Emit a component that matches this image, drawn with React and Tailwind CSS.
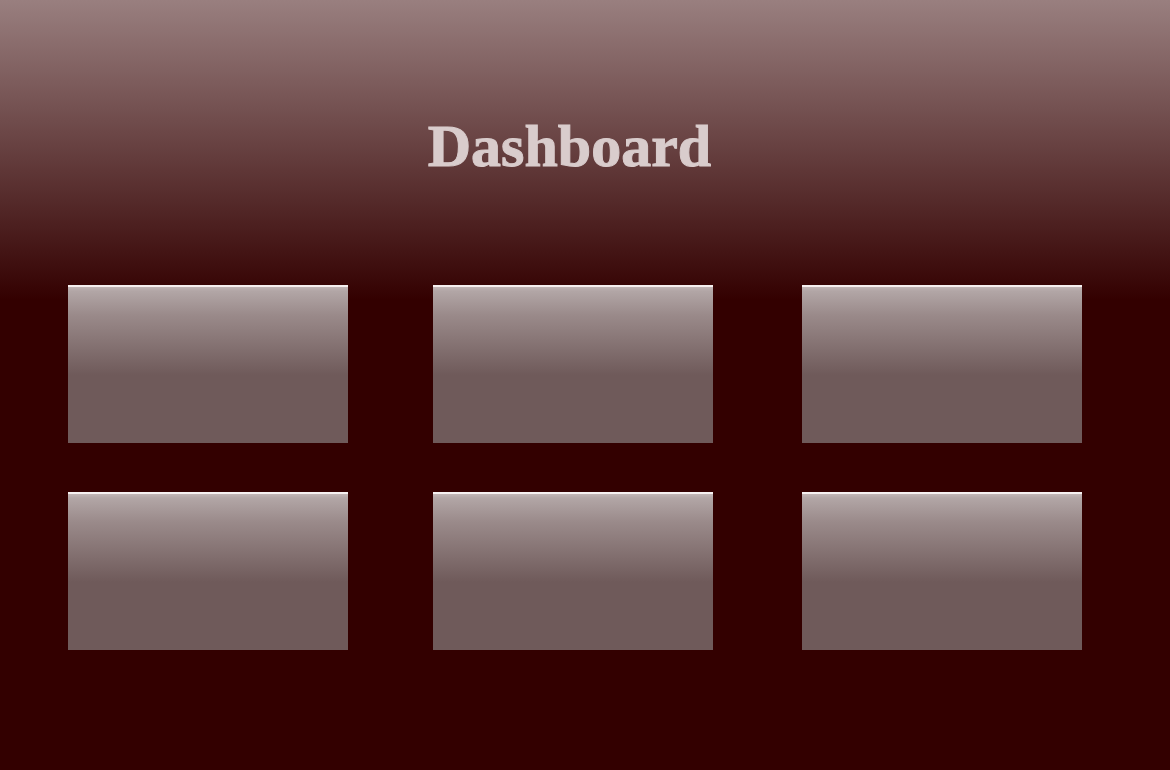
export default function App() {
  const card = "h-[158px] w-[280px] bg-[linear-gradient(to_bottom,#f6f0f0_0px,#f6f0f0_2px,#c2b6b6_2px,#b2a6a6_6px,#9a8a8a_30px,#6f5a5a_90px,#6f5a5a_100%)]";
  return (
    <div className="min-h-[770px] w-full bg-[#330000] bg-[linear-gradient(to_bottom,#997f7f_0px,#330000_300px,#330000_100%)] flex flex-col">
      <div className="flex justify-center pr-[31px] pt-[114px] h-[285px]">
        <h1 className="text-[#d9cccc] text-[60px] leading-[64px] font-bold [-webkit-text-stroke:1px_#d9cccc]" style={{ fontFamily: '"Liberation Serif", "Times New Roman", serif' }}>
          Dashboard
        </h1>
      </div>
      <div className="flex flex-col gap-[49px] pl-[68px]">
        {[0, 1].map((r) => (
          <div key={r} className="flex">
            <div className={card} />
            <div className={card + " ml-[85px]"} />
            <div className={card + " ml-[89px]"} />
          </div>
        ))}
      </div>
    </div>
  );
}
